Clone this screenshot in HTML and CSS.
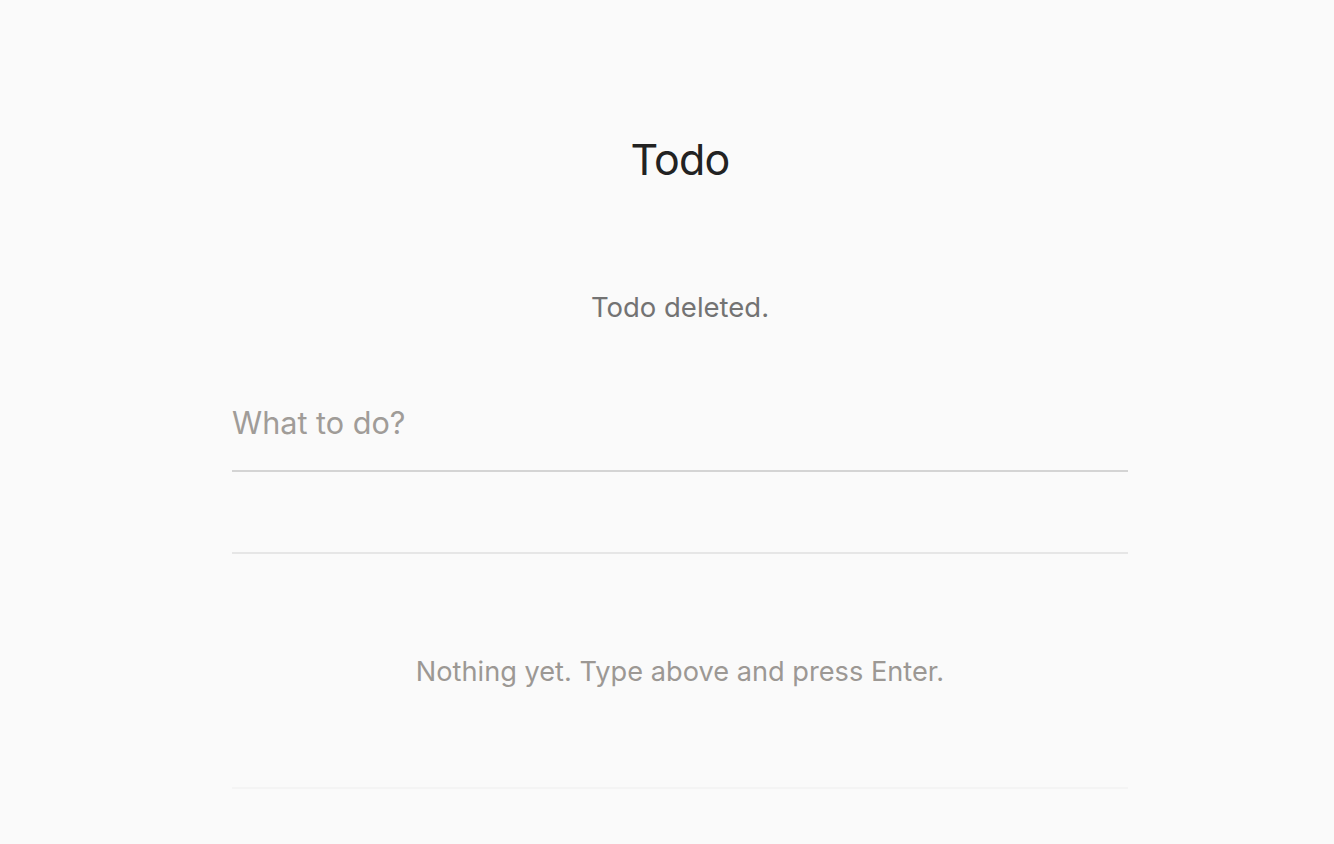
FILE: index.html
```html
<!DOCTYPE html>
<html lang="en">
<head>
<meta charset="utf-8">
<title>Todo</title>
<link rel="stylesheet" href="styles.css">
</head>
<body>
<main class="app">
  <h1 class="title">Todo</h1>
  <p class="status">Todo deleted.</p>
  <form class="new-todo">
    <input class="new-todo-input" type="text" placeholder="What to do?">
  </form>
  <ul class="todo-list"></ul>
  <p class="empty">Nothing yet. Type above and press Enter.</p>
  <div class="footer"></div>
</main>
</body>
</html>
```
FILE: styles.css
```css
html, body {
  margin: 0;
  padding: 0;
  background: #fafafa;
}
body {
  font-family: Inter, "Noto Sans", sans-serif;
  padding-left: 26px;
}
.app {
  width: 896px;
  margin: 0 auto;
  display: flex;
  flex-direction: column;
}
.title {
  margin: 129px 0 0;
  font-size: 43px;
  line-height: 60px;
  font-weight: 400;
  letter-spacing: -0.02em;
  text-align: center;
  color: #222222;
}
.status {
  margin: 98px 0 0;
  font-size: 27.5px;
  line-height: 40px;
  text-align: center;
  color: #737373;
}
.new-todo {
  margin: 74px 0 0;
}
.new-todo-input {
  display: block;
  width: 100%;
  box-sizing: border-box;
  border: none;
  border-bottom: 2px solid #d4d4d4;
  background: transparent;
  padding: 0 0 25px;
  font-family: inherit;
  font-size: 30.6px;
  line-height: 44px;
  color: #222;
  outline: none;
}
.new-todo-input::placeholder {
  color: #a09c98;
}
.todo-list {
  list-style: none;
  margin: 0;
  padding: 0;
  height: 80px;
  border-bottom: 2px solid #e6e6e6;
}
.empty {
  margin: 100px 0 0;
  font-size: 27.2px;
  line-height: 36px;
  text-align: center;
  color: #9c9894;
}
.footer {
  margin-top: 97px;
  border-top: 2px solid #f4f4f4;
}
```
